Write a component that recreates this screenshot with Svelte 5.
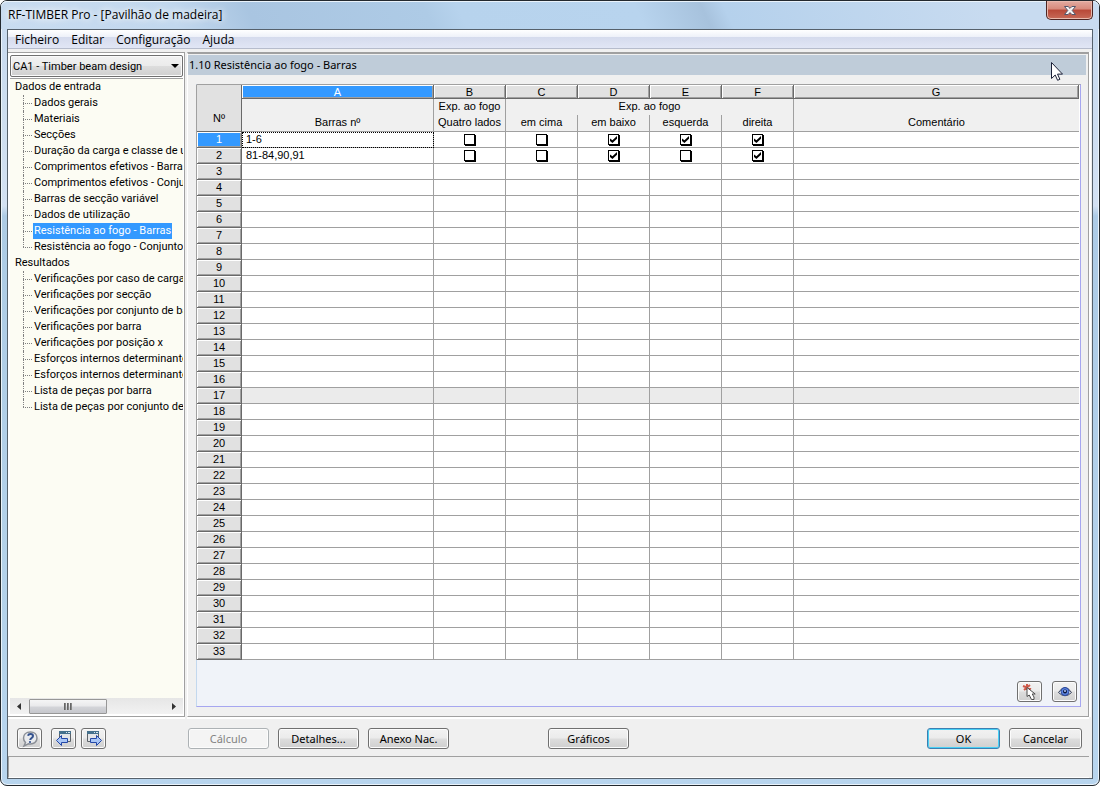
<script lang="ts">
	const menus = ['Ficheiro', 'Editar', 'Configuração', 'Ajuda'];

	const tree = [
		{
			label: 'Dados de entrada',
			items: [
				'Dados gerais',
				'Materiais',
				'Secções',
				'Duração da carga e classe de u',
				'Comprimentos efetivos - Barras',
				'Comprimentos efetivos - Conju',
				'Barras de secção variável',
				'Dados de utilização',
				'Resistência ao fogo - Barras',
				'Resistência ao fogo - Conjunto'
			]
		},
		{
			label: 'Resultados',
			items: [
				'Verificações por caso de carga',
				'Verificações por secção',
				'Verificações por conjunto de ba',
				'Verificações por barra',
				'Verificações por posição x',
				'Esforços internos determinante',
				'Esforços internos determinante',
				'Lista de peças por barra',
				'Lista de peças por conjunto de'
			]
		}
	];

	const columns = ['A', 'B', 'C', 'D', 'E', 'F', 'G'];
	const sides = ['Quatro lados', 'em cima', 'em baixo', 'esquerda', 'direita'];

	type Row = { no: number; members: string; fire: boolean[] | null };

	const rows: Row[] = $state(
		Array.from({ length: 33 }, (_, i) => ({ no: i + 1, members: '', fire: null }))
	);
	rows[0].members = '1-6';
	rows[0].fire = [false, false, true, true, true];
	rows[1].members = '81-84,90,91';
	rows[1].fire = [false, false, true, false, true];

	let current = $state('Resistência ao fogo - Barras');
	let activeRow = $state(1);
</script>

<div class="window">
	<header class="titlebar">
		<h1>RF-TIMBER Pro - [Pavilhão de madeira]</h1>
		<button class="close" aria-label="Fechar">
			<svg width="14" height="11" viewBox="0 0 14 11">
				<path
					d="M1.5 1.500h3.600L7 3.400l1.900-1.900h3.600L9.200 5.500l3.300 4H8.900L7 7.600 5.100 9.500H1.500l3.300-4z"
					fill="#f4f4f4"
					stroke="#53566b"
				/>
			</svg>
		</button>
	</header>

	<div class="client">
		<nav class="menubar">
			{#each menus as menu}
				<button>{menu}</button>
			{/each}
		</nav>

		<div class="body">
			<aside class="sidebar">
				<div class="combo">
					<select aria-label="Caso">
						<option>CA1 - Timber beam design</option>
					</select>
					<svg width="8" height="4" viewBox="0 0 8 4"><path d="M0 0h8L4 4z" fill="#000" /></svg>
				</div>
				<div class="tree">
					{#each tree as group}
						<div class="group">{group.label}</div>
						<ul>
							{#each group.items as item}
								<li>
									<button class:selected={item === current} onclick={() => (current = item)}>
										{item}
									</button>
								</li>
							{/each}
						</ul>
					{/each}
				</div>
				<div class="scrollbar">
					<svg width="4" height="7" viewBox="0 0 4 7"><path d="M4 0v7L0 3.500z" fill="#333" /></svg>
					<div class="track">
						<div class="thumb"><i></i><i></i><i></i></div>
					</div>
					<svg width="4" height="7" viewBox="0 0 4 7"><path d="M0 0v7l4-3.500z" fill="#333" /></svg>
				</div>
			</aside>

			<main class="content">
				<h2>1.10 Resistência ao fogo - Barras</h2>
				<div class="sheet">
					<table>
						<colgroup>
							<col class="c-no" />
							<col class="c-members" />
							<col class="c-side" span="5" />
							<col />
						</colgroup>
						<thead>
							<tr class="letters">
								<th class="corner" rowspan="3">Nº</th>
								{#each columns as column, i}
									<th class:active={i === 0}>{column}</th>
								{/each}
							</tr>
							<tr class="groups">
								<th class="tall" rowspan="2">Barras nº</th>
								<th>Exp. ao fogo</th>
								<th colspan="4">Exp. ao fogo</th>
								<th class="tall" rowspan="2">Comentário</th>
							</tr>
							<tr class="names">
								{#each sides as side}
									<th>{side}</th>
								{/each}
							</tr>
						</thead>
						<tbody>
							{#each rows as row (row.no)}
								<tr class:shaded={row.no === 17} onclick={() => (activeRow = row.no)}>
									<th class:active={row.no === activeRow}>{row.no}</th>
									<td class="members" class:focus={row.no === activeRow}>{row.members}</td>
									{#each sides as side, i}
										<td class="check">
											{#if row.fire}
												<input
													type="checkbox"
													aria-label="{side}, {row.no}"
													bind:checked={row.fire[i]}
												/>
											{/if}
										</td>
									{/each}
									<td></td>
								</tr>
							{/each}
						</tbody>
					</table>
					<div class="tools">
						<button class="btn icon" aria-label="Selecionar barras">
							<svg width="18" height="18" viewBox="0 0 18 18">
								<path d="M2 3l8 3M3 7l6-5M6 1v6" stroke="#cf5a4a" stroke-width="2" />
								<path
									d="M6 4.500v9l2.200-1.500 2.300 4.500h2.500v-2.500L11.200 11h3z"
									fill="#fff"
									stroke="#4c4c4c"
								/>
							</svg>
						</button>
						<button class="btn icon" aria-label="Ver">
							<svg width="14" height="12" viewBox="0 0 14 12">
								<path d="M.5 6.500Q7-3.500 13.500 6.500 7 13 .5 6.500z" fill="#e4eaf4" stroke="#333c55" />
								<circle cx="7" cy="5.500" r="4" fill="#5b84e0" stroke="#2d489c" />
								<circle cx="7" cy="5.500" r="2" fill="#0c1538" />
								<circle cx="7" cy="5" r="1" fill="#b9ccff" />
							</svg>
						</button>
					</div>
				</div>
			</main>
		</div>

		<footer class="actions">
			<button class="btn icon" aria-label="Ajuda">
				<svg width="18" height="18" viewBox="0 0 18 18">
					<path
						d="M9.500 2C5 2 2.500 4.800 2.500 8c0 2 .8 3.300 2 4.500L3 16l4.500-2.200c5.500 1 8.500-2 8.500-5.800s-3-6-6.500-6z"
						fill="#e9ebee"
						stroke="#8b8f96"
						stroke-width="1.500"
					/>
					<path
						d="M7 5.800C7.500 3.500 12 3.500 12 6c0 2-2.600 2-2.800 4"
						fill="none"
						stroke="#34528f"
						stroke-width="2"
					/>
					<circle cx="9" cy="12" r="1.100" fill="#34528f" />
				</svg>
			</button>
			<button class="btn icon gap" aria-label="Anterior">
				<svg width="18" height="18" viewBox="0 0 18 18">
					<path d="M4.500 1.500h11v10h-11z" fill="#e3e5e8" stroke="#5c6268" />
					<path d="M4 1h12v3H4z" fill="#44708c" />
					<path d="M11 2.500h1M13 2.500h2" stroke="#d8e8f2" />
					<path d="M1.500 10.500l5-5v3h6v4h-6v3z" fill="#a9c6f6" stroke="#2448a8" />
				</svg>
			</button>
			<button class="btn icon" aria-label="Seguinte">
				<svg width="18" height="18" viewBox="0 0 18 18">
					<path d="M2.500 1.500h11v10h-11z" fill="#e3e5e8" stroke="#5c6268" />
					<path d="M2 1h12v3H2z" fill="#44708c" />
					<path d="M9 2.500h1M11 2.500h2" stroke="#d8e8f2" />
					<path d="M16.500 10.500l-5-5v3h-6v4h6v3z" fill="#a9c6f6" stroke="#2448a8" />
				</svg>
			</button>
			<div class="group-main">
				<button class="btn" disabled>Cálculo</button>
				<button class="btn">Detalhes...</button>
				<button class="btn">Anexo Nac.</button>
				<button class="btn graphics">Gráficos</button>
			</div>
			<div class="group-end">
				<button class="btn default">OK</button>
				<button class="btn">Cancelar</button>
			</div>
		</footer>

		<div class="statusbar"></div>
	</div>

	<svg class="pointer" width="12" height="19" viewBox="0 0 12 19">
		<path
			d="M.5.500v16l3.700-3.500 2.400 5.300 2.300-1-2.400-5.200h5z"
			fill="#fff"
			stroke="#1c2138"
		/>
	</svg>
</div>

<style>
	:global(body) {
		margin: 0;
		background: #fff;
	}

	.window {
		position: relative;
		display: flex;
		flex-direction: column;
		box-sizing: border-box;
		min-height: 100vh;
		padding: 0 6px 6px;
		border: 1px solid #23292f;
		border-radius: 7px;
		box-shadow: inset 0 0 0 1px #eaf3fb;
		background: linear-gradient(#c6d9ee, #d3e1f3 205px, #adcbe6 215px, #b8d5ee);
		font-family: Roboto, Tahoma, sans-serif;
		font-size: 11px;
		color: #000;
	}

	button {
		font: inherit;
		color: inherit;
	}

	.titlebar {
		display: flex;
		justify-content: space-between;
		height: 28px;
		margin: 0 -6px;
		padding: 0 6px 0 7px;
		border-radius: 6px 6px 0 0;
		box-shadow: inset 0 1px #eaf3fb;
		background: linear-gradient(
			65deg,
			#c9dcf0,
			#c2d8ee 16%,
			#a9c5e1 23%,
			#aecbe6 39%,
			#b7d3ed 42%,
			#b8d4ee 58%,
			#a7c2dd 64%,
			#b5d1ec 66%,
			#c8dbf0 90%
		);
	}

	h1 {
		margin: 0;
		font: 12px/28px 'Open Sans', 'Segoe UI', sans-serif;
		text-shadow:
			0 0 6px #fff,
			0 0 10px #fff;
	}

	.close {
		display: grid;
		place-items: center;
		width: 47px;
		height: 19px;
		padding: 0;
		border: 1px solid #4d2523;
		border-top: 0;
		border-radius: 0 0 5px 5px;
		box-shadow: inset 0 0 0 1px #e9b9ad;
		background: linear-gradient(#e3aba1, #d78a7c 45%, #b84838 50%, #c76a58);
	}

	.client {
		display: flex;
		flex: 1;
		flex-direction: column;
		border: 1px solid #56616c;
		background: #f0f0f0;
	}

	.menubar {
		display: flex;
		height: 18px;
		padding-left: 1px;
		border-bottom: 1px solid #b6bccc;
		background: linear-gradient(#fff, #eef1f9 38%, #d5dbed 40%, #e1e6f5);
	}

	.menubar button {
		padding: 0 6px;
		border: 0;
		background: none;
		font: 12px/20px 'Open Sans', 'Segoe UI', sans-serif;
	}

	.body {
		display: flex;
		flex: 1;
		gap: 2px;
		padding: 3px 3px 0 0;
	}

	.sidebar {
		display: flex;
		flex: none;
		flex-direction: column;
		box-sizing: border-box;
		width: 177px;
		border: 1px solid #a0a0a0;
		border-left: 0;
		padding: 2px 1px 2px 2px;
		box-shadow: 0 2px #fff;
		background: #fff;
	}

	.combo {
		position: relative;
		height: 22px;
		margin-bottom: 1px;
	}

	.combo svg {
		position: absolute;
		top: 9px;
		right: 4px;
		pointer-events: none;
	}

	select {
		width: 100%;
		height: 22px;
		padding: 0 2px;
		border: 1px solid #707070;
		border-radius: 2px;
		appearance: none;
		box-shadow: inset 0 0 0 1px #fafafa;
		background: linear-gradient(#f2f2f2, #ebebeb 50%, #dddddd 52%, #cfcfcf);
		font: inherit;
		color: #000;
	}

	.tree {
		flex: 1;
		overflow: hidden;
		border-top: 1px solid #a0a0a0;
		background: #fcfcf3;
		line-height: 16px;
		white-space: nowrap;
	}

	.group {
		padding-left: 5px;
	}

	ul {
		margin: 0;
		padding: 0 0 0 13px;
		list-style: none;
	}

	li {
		position: relative;
		height: 16px;
		padding-left: 10px;
	}

	li::before {
		position: absolute;
		top: 0;
		bottom: 0;
		left: 0;
		border-left: 1px dotted #808080;
		content: '';
	}

	li:last-child::before {
		bottom: 8px;
	}

	li::after {
		position: absolute;
		top: 8px;
		left: 0;
		width: 9px;
		border-top: 1px dotted #808080;
		content: '';
	}

	li button {
		display: block;
		height: 16px;
		padding: 0 1px;
		border: 0;
		background: none;
		line-height: 16px;
	}

	li button.selected {
		background: #3399ff;
		color: #fff;
	}

	.scrollbar {
		display: flex;
		align-items: center;
		gap: 8px;
		height: 16px;
		padding: 0 7px;
		background: linear-gradient(#e6e6e6, #f2f2f2);
	}

	.track {
		display: flex;
		flex: 1;
	}

	.thumb {
		display: flex;
		align-items: center;
		justify-content: center;
		gap: 1px;
		box-sizing: border-box;
		width: 58%;
		height: 15px;
		border: 1px solid #979797;
		border-radius: 1px;
		background: linear-gradient(#f5f5f5, #e9e9eb 48%, #d4d5d9 52%, #c6c7cc);
	}

	.thumb i {
		width: 2px;
		height: 7px;
		background: linear-gradient(90deg, #555, #999);
	}

	.content {
		display: flex;
		flex: 1;
		flex-direction: column;
		min-width: 0;
		border: 1px solid #a0a0a0;
		border-top-width: 2px;
		border-left: 1px solid #fff;
		box-shadow:
			0 2px #fff,
			2px 0 #fff;
	}

	h2 {
		margin: 1px 2px 0 0;
		padding-left: 1px;
		background: #bfccd9;
		font: 11px/20px 'Noto Sans', Tahoma, sans-serif;
	}

	.sheet {
		display: flex;
		flex: 1;
		flex-direction: column;
		margin: 9px 7px 9px 8px;
		border: 1px solid #a6a6f0;
		border-top-color: #a0a0a0;
		border-left-color: #c3d8ee;
		background: #f0f3f9;
	}

	table {
		width: 100%;
		padding-right: 1px;
		border-spacing: 0;
		box-shadow: -1px 0 #a0a0a0;
		background: #fff;
		table-layout: fixed;
		font: 11px/12px 'Liberation Sans', Arial, sans-serif;
	}

	.c-no {
		width: 45px;
	}

	.c-members {
		width: 192px;
	}

	.c-side {
		width: 72px;
	}

	th,
	td {
		box-sizing: border-box;
		height: 16px;
		padding: 0 0 2px;
		border-right: 1px solid #a0a0a0;
		border-bottom: 1px solid #a0a0a0;
		font-weight: normal;
		white-space: nowrap;
	}

	th:last-child,
	td:last-child {
		border-right: 0;
	}

	thead th {
		background: #f0f0f0;
	}

	.letters th {
		height: 14px;
		padding: 0;
		border-right: 1px solid #696969;
		border-bottom-color: #696969;
		box-shadow:
			inset 1px 1px #fff,
			inset -1px -1px #a0a0a0;
		background: #e1e1e1;
	}

	.letters th.corner {
		height: 47px;
		padding-top: 20px;
		box-shadow: none;
	}

	.letters th.active,
	tbody th.active {
		background: #3399ff;
		color: #fff;
	}

	.groups th {
		border-bottom: 0;
	}

	.groups th.tall {
		padding-bottom: 3px;
		border-bottom: 1px solid #a0a0a0;
		vertical-align: bottom;
	}

	.names th {
		height: 17px;
	}

	.names th:last-child {
		border-right: 1px solid #a0a0a0;
	}

	tbody th {
		border-right-color: #696969;
		border-bottom-color: #696969;
		box-shadow:
			inset 1px 1px #fff,
			inset -1px -1px #a0a0a0;
		background: #e1e1e1;
	}

	.members {
		padding-left: 4px;
	}

	.members.focus {
		outline: 1px dotted #000;
		outline-offset: -1px;
	}

	.shaded td {
		background: #ebebeb;
	}

	.check {
		padding: 0;
		line-height: 0;
		text-align: center;
	}

	.check input {
		position: relative;
		width: 11px;
		height: 11px;
		margin: 0;
		border: 1px solid #000;
		appearance: none;
		box-shadow: 1px 1px #000;
		background: #fff;
		vertical-align: middle;
	}

	.check input:checked::after {
		position: absolute;
		inset: 1px;
		background: #000;
		clip-path: polygon(0 35%, 35% 62%, 100% 0, 100% 38%, 35% 100%, 0 72%);
		content: '';
	}

	.tools {
		display: flex;
		flex: 1;
		align-items: flex-end;
		justify-content: flex-end;
		gap: 10px;
		padding: 4px 3px;
	}

	.btn {
		display: grid;
		place-items: center;
		box-sizing: border-box;
		width: 81px;
		height: 21px;
		padding: 0;
		border: 1px solid #707070;
		border-radius: 3px;
		box-shadow: inset 0 0 0 1px #fcfcfc;
		background: linear-gradient(#f2f2f2, #ebebeb 48%, #dddddd 52%, #cfcfcf);
	}

	.btn.icon {
		width: 25px;
	}

	.btn:disabled {
		border-color: #adb2b5;
		background: #f4f4f4;
		color: #838383;
	}

	.btn.default {
		border-color: #3c7fb1;
		box-shadow: inset 0 0 0 1px #48d0f5;
	}

	.actions {
		display: flex;
		gap: 5px;
		padding: 11px 10px 7px 9px;
		font-family: 'Noto Sans', Tahoma, sans-serif;
	}

	.gap {
		margin-left: 4px;
	}

	.group-main,
	.group-end {
		display: flex;
		gap: 9px;
	}

	.group-main {
		flex: 1;
		margin-left: 77px;
	}

	.graphics {
		margin-left: 90px;
	}

	.group-end .btn {
		width: 73px;
	}

	.statusbar {
		height: 20px;
		margin-right: 3px;
		border-top: 1px solid #a0a0a0;
		border-left: 1px solid #a0a0a0;
		border-bottom: 1px solid #fff;
	}

	.pointer {
		position: absolute;
		top: 61px;
		right: 36px;
	}
</style>
